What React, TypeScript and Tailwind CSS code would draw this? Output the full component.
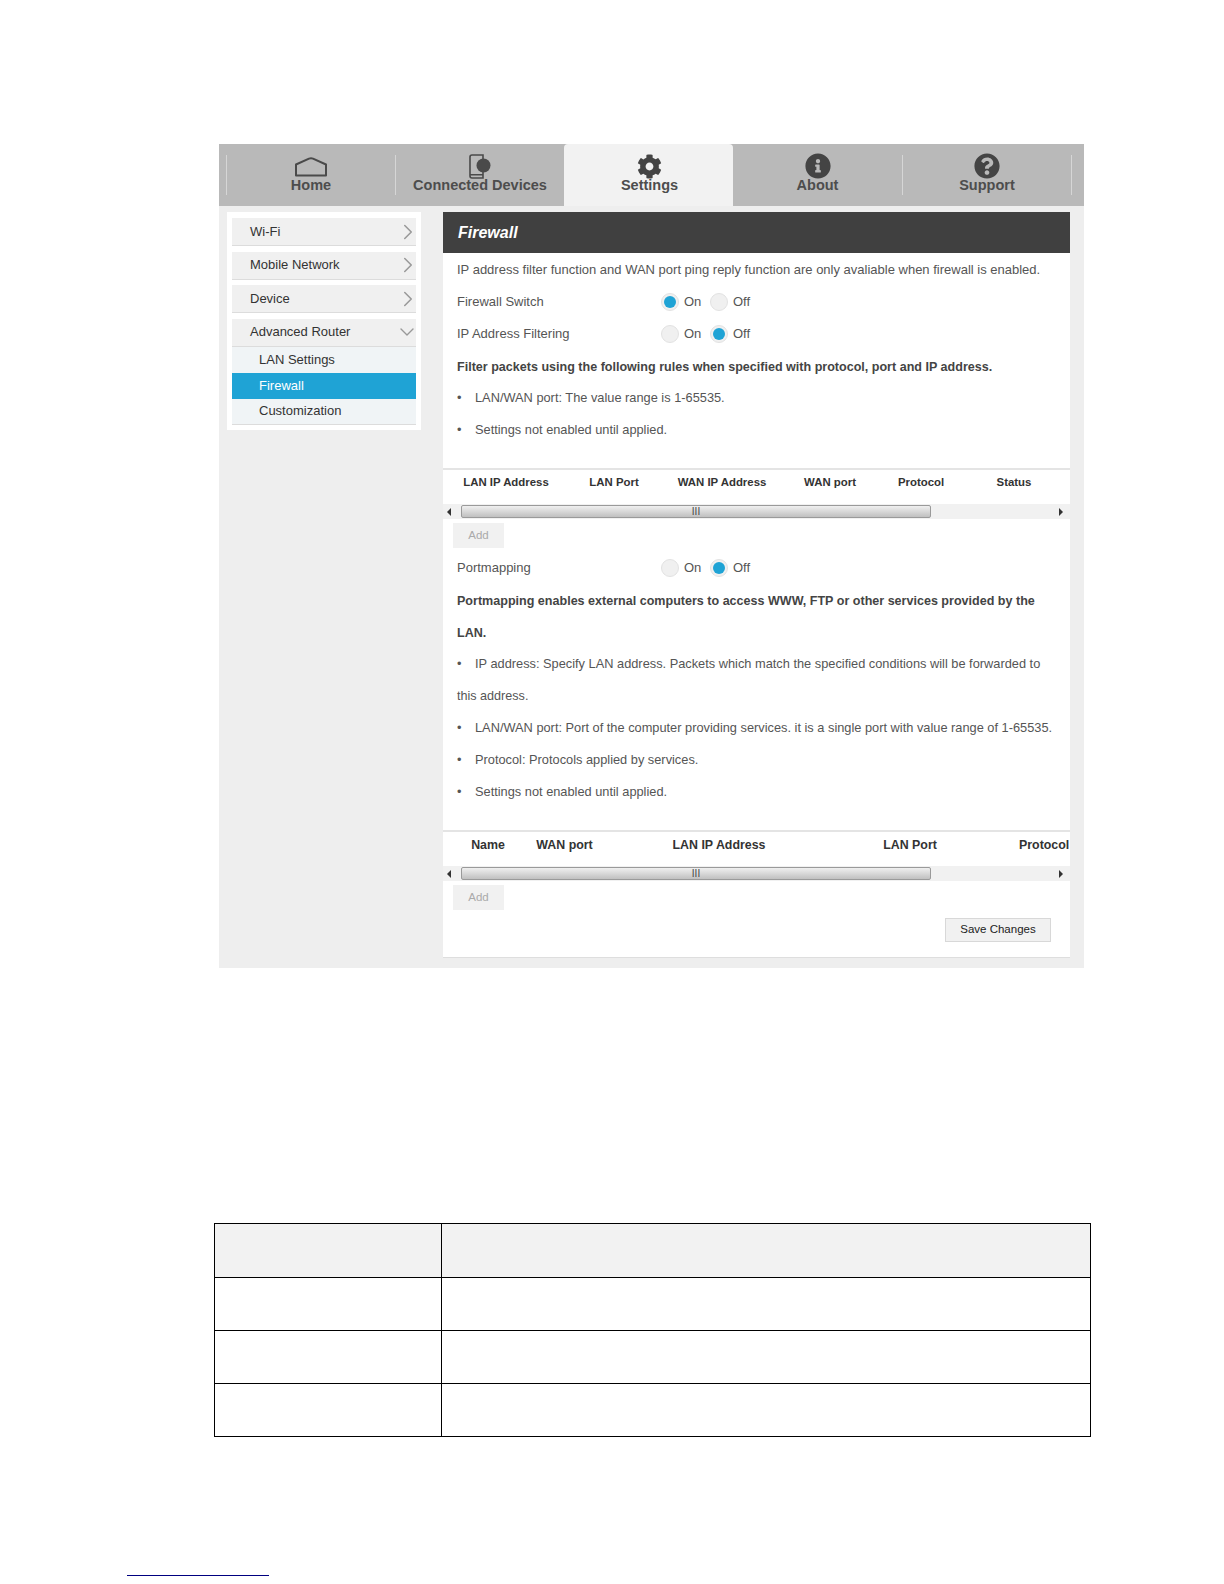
import { ChevronDown, ChevronRight } from "lucide-react";
import { FaCog, FaInfoCircle, FaQuestionCircle } from "react-icons/fa";

const HomeIcon = () => (
  <svg className="mt-[3px]" width="34" height="20" viewBox="0 0 34 20" fill="none" stroke="#4a4a4a" strokeWidth="2">
    <path d="M2 7.5 15 1.6q2-.8 4 0l13 5.900V18.500H2z" strokeLinejoin="round" />
  </svg>
);

const DevicesIcon = () => (
  <svg width="22" height="25" viewBox="0 0 22 25">
    <path d="M3 1h11v23H3a2 2 0 0 1-2-2V3a2 2 0 0 1 2-2z" fill="none" stroke="#4a4a4a" strokeWidth="1.6" />
    <rect x="1" y="20" width="13" height="1.500" fill="#4a4a4a" />
    <circle cx="14.500" cy="11.500" r="7" fill="#4a4a4a" />
  </svg>
);

const Separator = () => <div className="w-px h-[40px] self-center bg-[#d6d6d6]" />;

const Tab = ({ label, icon, width, active }: { label: string; icon: React.ReactNode; width: string; active?: boolean }) => (
  <div className={`${width} flex flex-col items-center ${active ? "pl-[2px] bg-[#f2f2f2] rounded-t-sm" : ""}`}>
    <div className="h-[22px] mt-[10px] flex items-start justify-center">{icon}</div>
    <div className="text-[14.5px] font-bold leading-[18px] text-[#4d4d4d]">{label}</div>
  </div>
);

const SideItem = ({ label, open }: { label: string; open?: boolean }) => (
  <div className="h-[28px] pl-[18px] flex items-center justify-between bg-[#f0f0f0] border-b border-[#dcdcdc] text-[13px] text-[#333]">
    <span>{label}</span>
    {open ? (
      <ChevronDown size={24} strokeWidth={1.4} className="-mr-[3px] text-[#999]" />
    ) : (
      <ChevronRight size={26} strokeWidth={1.4} className="-mr-[5px] text-[#999]" />
    )}
  </div>
);

const Radio = ({ on }: { on?: boolean }) => (
  <span className="w-[18px] h-[18px] rounded-full bg-[#f0f0f0] border border-[#e2e2e2] flex items-center justify-center">
    {on && <span className="w-[12px] h-[12px] rounded-full bg-[#1fa3d5]" />}
  </span>
);

const Toggle = ({ label, on }: { label: string; on: boolean }) => (
  <div className="h-[32px] flex items-center">
    <span className="w-[204px]">{label}</span>
    <Radio on={on} />
    <span className="ml-[5px] w-[26px]">On</span>
    <Radio on={!on} />
    <span className="ml-[5px]">Off</span>
  </div>
);

const Line = ({ children, bold }: { children: React.ReactNode; bold?: boolean }) => (
  <div className={`h-[32px] whitespace-nowrap ${bold ? "leading-[34px] text-[12.55px] font-bold text-[#444]" : "leading-[32px]"}`}>
    {children}
  </div>
);

const Bullet = ({ children }: { children: React.ReactNode }) => (
  <div className="h-[32px] flex items-center whitespace-nowrap text-[12.8px]">
    <span className="w-[18px] shrink-0">•</span>
    <span>{children}</span>
  </div>
);

const Columns = ({ cols, size }: { cols: [string, string][]; size: string }) => (
  <div className={`h-[36px] border-t-2 border-[#e4e4e4] flex overflow-hidden font-bold text-[#333] ${size}`}>
    {cols.map(([name, width]) => (
      <div key={name} className={`${width} shrink-0 pt-[4px] text-center whitespace-nowrap`}>
        {name}
      </div>
    ))}
  </div>
);

const ScrollBar = () => (
  <div className="h-[15px] bg-[#f1f1f1] flex items-center pl-[4px] pr-[7px]">
    <span className="w-0 h-0 border-y-[4px] border-y-transparent border-r-[4px] border-r-[#333]" />
    <div className="ml-[10px] w-[470px] h-[13px] rounded-[2px] border border-[#9a9a9a] bg-gradient-to-b from-[#f0f0f0] to-[#c0c0c0] flex items-center justify-center">
      <span className="text-[10px] leading-none text-[#444]">III</span>
    </div>
    <span className="ml-auto w-0 h-0 border-y-[4px] border-y-transparent border-l-[4px] border-l-[#333]" />
  </div>
);

const AddButton = () => (
  <div className="ml-[10px] mt-[4px] w-[51px] h-[25px] bg-[#f1f1f1] flex items-center justify-center text-[11.5px] text-[#aaa]">
    Add
  </div>
);

const Row = ({ className }: { className: string }) => (
  <div className={`grid grid-cols-[227px_1fr] ${className}`}>
    <div className="border-r border-black" />
    <div />
  </div>
);

export default function App() {
  return (
    <div className="w-[1224px] h-[1584px] bg-white pt-[144px] overflow-hidden font-['Liberation_Sans',Arial,sans-serif]">
      <div className="ml-[219px] w-[865px] h-[824px] bg-[#eeeeee]">
        <div className="h-[62px] pl-[7px] flex bg-[#b9b9b9]">
          <Separator />
          <Tab label="Home" width="w-[168px]" icon={<HomeIcon />} />
          <Separator />
          <Tab label="Connected Devices" width="w-[168px]" icon={<DevicesIcon />} />
          <Tab label="Settings" width="w-[169px]" active icon={<FaCog size={25} color="#444" />} />
          <Tab label="About" width="w-[169px]" icon={<FaInfoCircle size={26} color="#444" className="-mt-px" />} />
          <Separator />
          <Tab label="Support" width="w-[168px]" icon={<FaQuestionCircle size={26} color="#444" className="-mt-px" />} />
          <Separator />
        </div>

        <div className="pl-[8px] pt-[6px] flex items-start">
          <div className="w-[194px] bg-white p-[5px] pt-[6px] flex flex-col gap-[5.5px]">
            <SideItem label="Wi-Fi" />
            <SideItem label="Mobile Network" />
            <SideItem label="Device" />
            <div>
              <SideItem label="Advanced Router" open />
              <div className="bg-[#f0f4f6] border-b border-[#dcdcdc] text-[13px] text-[#333]">
                <div className="h-[26px] pl-[27px] flex items-center">LAN Settings</div>
                <div className="h-[26px] pl-[27px] flex items-center bg-[#1fa3d5] text-white">Firewall</div>
                <div className="h-[25px] pl-[27px] flex items-center">Customization</div>
              </div>
            </div>
          </div>

          <div className="ml-[22px] w-[627px] h-[746px] bg-white border-b border-[#dedede] text-[13px] text-[#555]">
            <div className="h-[41px] pl-[15px] pt-px flex items-center bg-[#404040] text-[16px] font-bold italic text-white">
              Firewall
            </div>
            <div className="px-[14px] pt-[1px]">
              <Line>IP address filter function and WAN port ping reply function are only avaliable when firewall is enabled.</Line>
              <Toggle label="Firewall Switch" on />
              <Toggle label="IP Address Filtering" on={false} />
              <Line bold>Filter packets using the following rules when specified with protocol, port and IP address.</Line>
              <Bullet>LAN/WAN port: The value range is 1-65535.</Bullet>
              <Bullet>Settings not enabled until applied.</Bullet>
            </div>
            <div className="mt-[22px]">
              <Columns
                size="text-[11.4px]"
                cols={[
                  ["LAN IP Address", "w-[126px]"],
                  ["LAN Port", "w-[90px]"],
                  ["WAN IP Address", "w-[126px]"],
                  ["WAN port", "w-[90px]"],
                  ["Protocol", "w-[92px]"],
                  ["Status", "w-[94px]"],
                ]}
              />
              <ScrollBar />
              <AddButton />
            </div>
            <div className="px-[14px] mt-[4px]">
              <Toggle label="Portmapping" on={false} />
              <Line bold>Portmapping enables external computers to access WWW, FTP or other services provided by the</Line>
              <Line bold>LAN.</Line>
              <Bullet>IP address: Specify LAN address. Packets which match the specified conditions will be forwarded to</Bullet>
              <Line>
                <span className="text-[12.6px]">this address.</span>
              </Line>
              <Bullet>LAN/WAN port: Port of the computer providing services. it is a single port with value range of 1-65535.</Bullet>
              <Bullet>Protocol: Protocols applied by services.</Bullet>
              <Bullet>Settings not enabled until applied.</Bullet>
            </div>
            <div className="mt-[22px]">
              <Columns
                size="text-[12.4px]"
                cols={[
                  ["Name", "w-[90px]"],
                  ["WAN port", "w-[63px]"],
                  ["LAN IP Address", "w-[246px]"],
                  ["LAN Port", "w-[136px]"],
                  ["Protocol", "w-[150px] pl-[41px] text-left"],
                ]}
              />
              <ScrollBar />
              <AddButton />
            </div>
            <div className="mt-[8px] mr-[19px] flex justify-end">
              <div className="w-[106px] h-[24px] bg-[#f1f1f1] border border-[#d8d8d8] flex items-center justify-center text-[11.5px] text-[#222]">
                Save Changes
              </div>
            </div>
          </div>
        </div>
      </div>

      <div className="mt-[255px] ml-[214px] w-[877px] border border-black">
        <Row className="h-[54px] bg-[#f2f2f2] border-b border-black" />
        <Row className="h-[53px] border-b border-black" />
        <Row className="h-[53px] border-b border-black" />
        <Row className="h-[52px]" />
      </div>

      <div className="mt-[138px] ml-[127px] w-[142px] h-px bg-[#000080]" />
    </div>
  );
}
